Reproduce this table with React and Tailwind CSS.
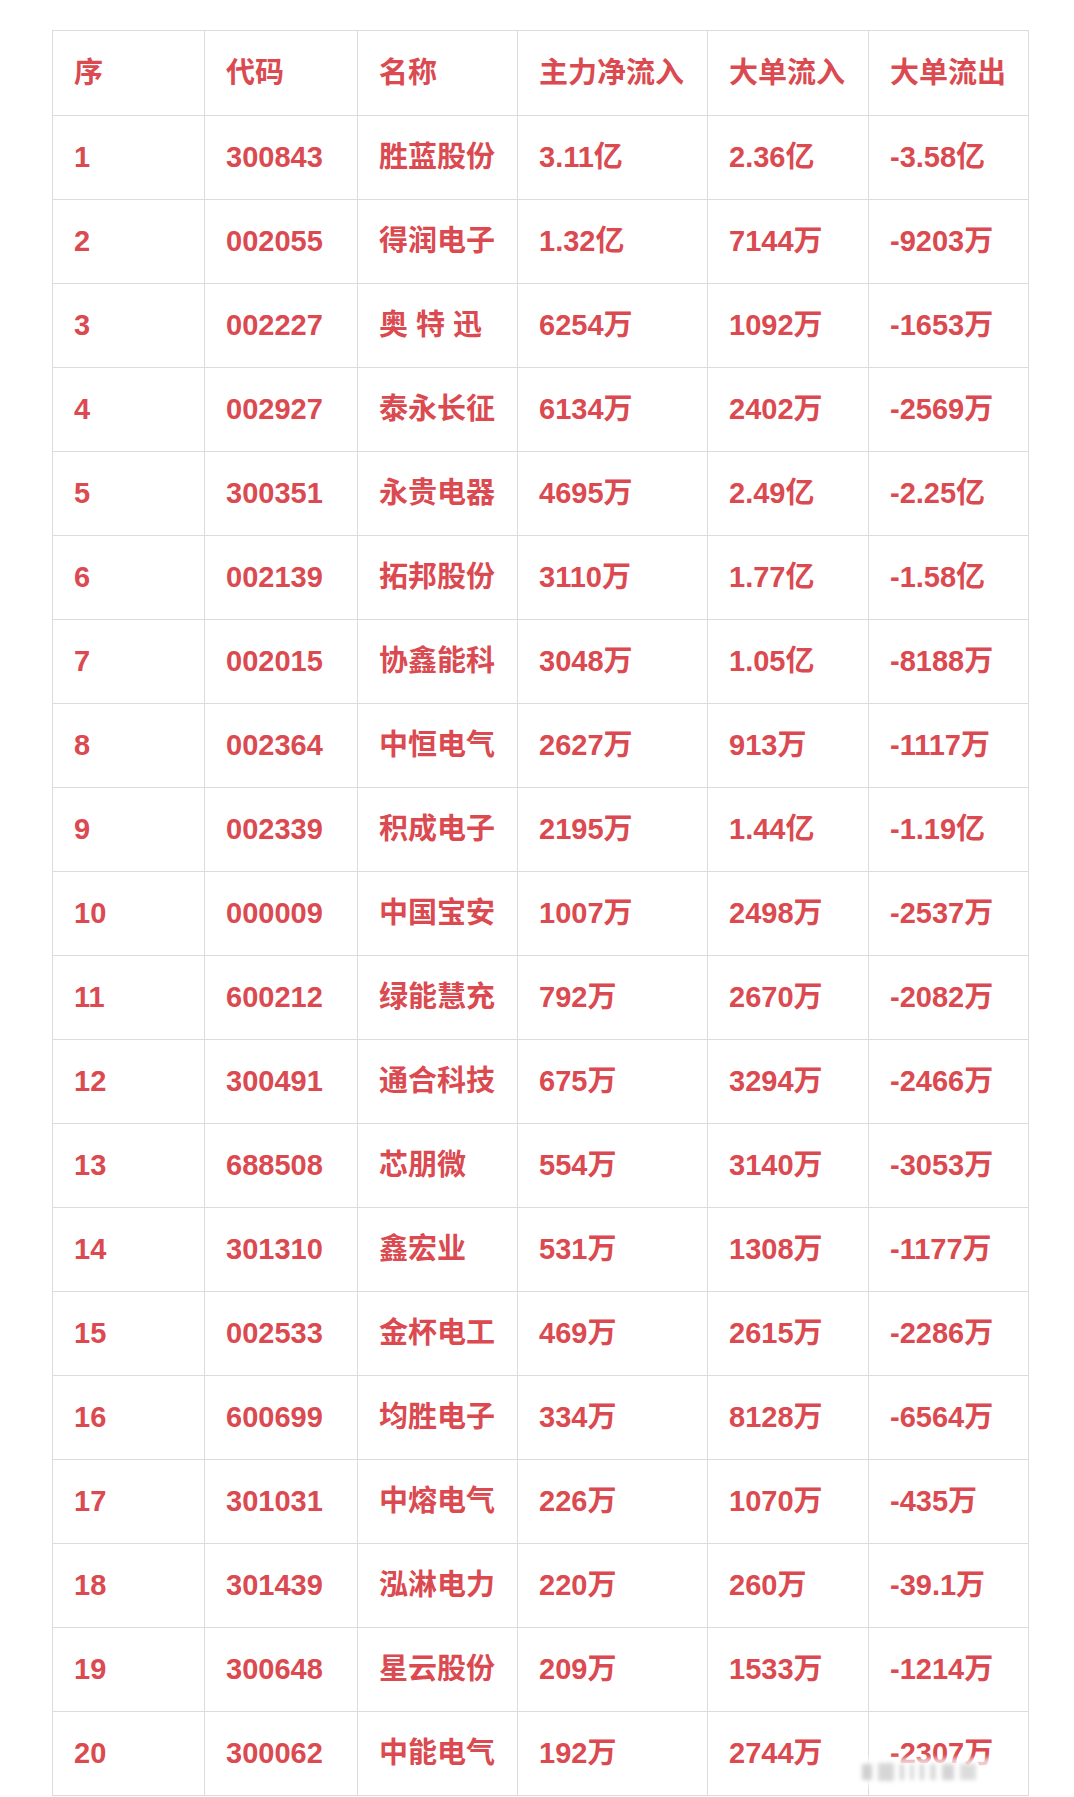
import React from "react";

const headers = ["序", "代码", "名称", "主力净流入", "大单流入", "大单流出"];
const rows = [
  ["1", "300843", "胜蓝股份", "3.11亿", "2.36亿", "-3.58亿"],
  ["2", "002055", "得润电子", "1.32亿", "7144万", "-9203万"],
  ["3", "002227", "奥 特 迅", "6254万", "1092万", "-1653万"],
  ["4", "002927", "泰永长征", "6134万", "2402万", "-2569万"],
  ["5", "300351", "永贵电器", "4695万", "2.49亿", "-2.25亿"],
  ["6", "002139", "拓邦股份", "3110万", "1.77亿", "-1.58亿"],
  ["7", "002015", "协鑫能科", "3048万", "1.05亿", "-8188万"],
  ["8", "002364", "中恒电气", "2627万", "913万", "-1117万"],
  ["9", "002339", "积成电子", "2195万", "1.44亿", "-1.19亿"],
  ["10", "000009", "中国宝安", "1007万", "2498万", "-2537万"],
  ["11", "600212", "绿能慧充", "792万", "2670万", "-2082万"],
  ["12", "300491", "通合科技", "675万", "3294万", "-2466万"],
  ["13", "688508", "芯朋微", "554万", "3140万", "-3053万"],
  ["14", "301310", "鑫宏业", "531万", "1308万", "-1177万"],
  ["15", "002533", "金杯电工", "469万", "2615万", "-2286万"],
  ["16", "600699", "均胜电子", "334万", "8128万", "-6564万"],
  ["17", "301031", "中熔电气", "226万", "1070万", "-435万"],
  ["18", "301439", "泓淋电力", "220万", "260万", "-39.1万"],
  ["19", "300648", "星云股份", "209万", "1533万", "-1214万"],
  ["20", "300062", "中能电气", "192万", "2744万", "-2307万"],
];

const widths = ["w-[152px]", "w-[153px]", "w-[160px]", "w-[190px]", "w-[161px]", "w-[160px]"];

function Row({ cells, header }) {
  return (
    <div className={`flex ${header ? "h-[85px]" : "h-[84px]"}`}>
      {cells.map((c, i) => (
        <div
          key={i}
          className={`${widths[i]} shrink-0 flex items-center pl-[21px] border-r border-b border-[#dcdcdc] whitespace-pre`}
        >
          {c}
        </div>
      ))}
    </div>
  );
}

export default function App() {
  return (
    <div
      className="relative w-[1074px] h-[1797px] overflow-hidden bg-white text-[#da4a50] font-bold text-[29px] leading-none"
      style={{ fontFamily: '"Liberation Sans", Arial, "Noto Sans CJK SC", sans-serif' }}
    >
      <div className="pt-[30px] pl-[52px]">
        <div className="w-[977px] border-l border-t border-[#dcdcdc]">
          <Row cells={headers} header />
          {rows.map((r, i) => (
            <Row key={i} cells={r} />
          ))}
        </div>
      </div>
      <div className="absolute left-[854px] top-[1758px] w-[158px] h-[28px] bg-white/70 blur-[2px] flex items-center gap-[6px] px-2">
        <div className="w-[10px] h-[16px] bg-[#cfcfcf]" />
        <div className="w-[16px] h-[18px] bg-[#d6d6d6]" />
        <div className="w-[4px] h-[16px] bg-[#d0d0d0]" />
        <div className="w-[4px] h-[16px] bg-[#d8d8d8]" />
        <div className="w-[4px] h-[16px] bg-[#d0d0d0]" />
        <div className="w-[6px] h-[16px] bg-[#dadada]" />
        <div className="w-[12px] h-[16px] bg-[#d4d4d4]" />
        <div className="w-[16px] h-[16px] bg-[#dcdcdc]" />
      </div>
    </div>
  );
}
